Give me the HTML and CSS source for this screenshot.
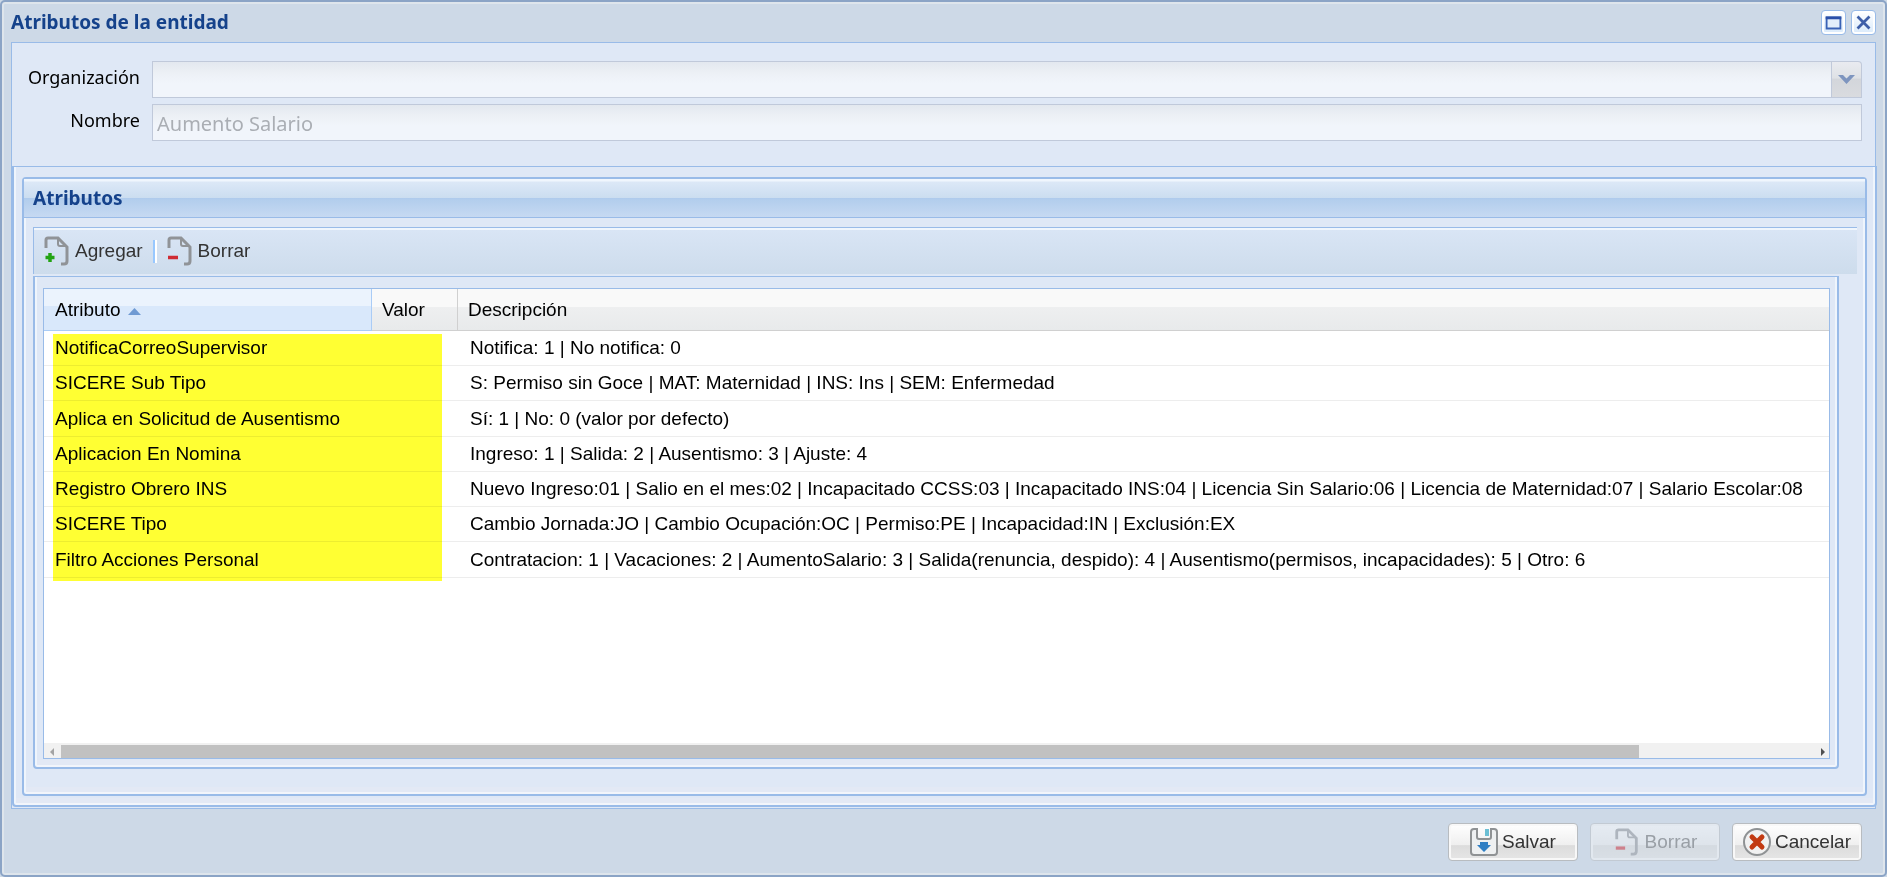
FILE: index.html
```html
<!DOCTYPE html>
<html lang="es">
<head>
  <meta charset="UTF-8">
  <meta name="viewport" content="width=device-width, initial-scale=1">
  <title>Atributos de la entidad</title>
  <link rel="stylesheet" href="styles.css">
</head>
<body>
  <!-- Iconos compartidos -->
  <svg class="sprite" aria-hidden="true">
    <symbol id="page" viewBox="0 0 26 30">
      <path d="M2 12V4Q2 2 4 2H14L23 11V25Q23 28 20 28H17" fill="none" stroke="#909397" stroke-width="3"/>
      <path d="M14 3V8Q14 10 16 10H22" fill="none" stroke="#909397" stroke-width="2"/>
    </symbol>
  </svg>

  <div class="window">
    <header class="window-header">
      <h1>Atributos de la entidad</h1>
      <button type="button" class="tool" aria-label="Maximizar">
        <svg viewBox="0 0 25 25"><path d="M5 7H20V19H5Z" fill="#e3eefb" stroke="#3a62b5" stroke-width="2"/><path d="M4 6H21V9H4Z" fill="#2b4fa8"/></svg>
      </button>
      <button type="button" class="tool" aria-label="Cerrar">
        <svg viewBox="0 0 25 25"><path d="M6 6L19 19M19 6L6 19" stroke="#3f5fa8" stroke-width="3"/></svg>
      </button>
    </header>

    <main class="content">
      <form class="entity-form">
        <label for="organizacion">Organización</label>
        <div class="combo">
          <select id="organizacion" disabled><option></option></select>
          <span class="trigger"><svg viewBox="0 0 17 10"><path d="M0 0H5L8.500 3.500L12 0H17L8.500 9Z" fill="#7e95bf"/></svg></span>
        </div>
        <label for="nombre">Nombre</label>
        <input type="text" id="nombre" value="Aumento Salario" disabled>
      </form>

      <div class="frame outer">
        <section class="frame panel">
          <h2>Atributos</h2>
          <div class="panel-body">
            <div class="toolbar">
              <button type="button" class="tb-btn">
                <svg viewBox="0 0 26 30"><use href="#page"/><path d="M6 17V26M1.500 21.500H10.500" stroke="#22a312" stroke-width="3.500"/></svg>
                Agregar
              </button>
              <span class="separator"></span>
              <button type="button" class="tb-btn">
                <svg viewBox="0 0 26 30"><use href="#page"/><path d="M1 21.500H11" stroke="#cf2b33" stroke-width="3.500"/></svg>
                Borrar
              </button>
            </div>

            <div class="frame grid-frame">
              <div class="grid">
                <div class="grid-view">
                  <table>
                    <thead>
                      <tr>
                        <th class="col-atributo sorted">Atributo <svg viewBox="0 0 13 7"><path d="M6.500 0L13 7H0Z" fill="#6f9ad3"/></svg></th>
                        <th class="col-valor">Valor</th>
                        <th>Descripción</th>
                      </tr>
                    </thead>
                    <tbody>
                      <tr><td>NotificaCorreoSupervisor</td><td></td><td>Notifica: 1 | No notifica: 0</td></tr>
                      <tr><td>SICERE Sub Tipo</td><td></td><td>S: Permiso sin Goce | MAT: Maternidad | INS: Ins | SEM: Enfermedad</td></tr>
                      <tr><td>Aplica en Solicitud de Ausentismo</td><td></td><td>Sí: 1 | No: 0 (valor por defecto)</td></tr>
                      <tr><td>Aplicacion En Nomina</td><td></td><td>Ingreso: 1 | Salida: 2 | Ausentismo: 3 | Ajuste: 4</td></tr>
                      <tr><td>Registro Obrero INS</td><td></td><td>Nuevo Ingreso:01 | Salio en el mes:02 | Incapacitado CCSS:03 | Incapacitado INS:04 | Licencia Sin Salario:06 | Licencia de Maternidad:07 | Salario Escolar:08</td></tr>
                      <tr><td>SICERE Tipo</td><td></td><td>Cambio Jornada:JO | Cambio Ocupación:OC | Permiso:PE | Incapacidad:IN | Exclusión:EX</td></tr>
                      <tr><td>Filtro Acciones Personal</td><td></td><td>Contratacion: 1 | Vacaciones: 2 | AumentoSalario: 3 | Salida(renuncia, despido): 4 | Ausentismo(permisos, incapacidades): 5 | Otro: 6</td></tr>
                    </tbody>
                  </table>
                  <div class="marker"></div>
                </div>
                <div class="scrollbar">
                  <svg viewBox="0 0 4 8"><path d="M4 0V8L0 4Z" fill="#a3a3a3"/></svg>
                  <div class="track"><div class="thumb"></div></div>
                  <svg viewBox="0 0 4 8"><path d="M0 0V8L4 4Z" fill="#505050"/></svg>
                </div>
              </div>
            </div>
          </div>
        </section>
      </div>
    </main>

    <footer class="window-footer">
      <button type="button" class="btn">
        <svg viewBox="0 0 28 28">
          <path d="M4 1H7V9Q7 11 9 11H19Q21 11 21 9V1H24Q27 1 27 4V24Q27 27 24 27H4Q1 27 1 24V4Q1 1 4 1Z" fill="#eef0f1" stroke="#8f9294" stroke-width="2"/>
          <path d="M15 1H19V8H15Z" fill="#6bbfd4"/>
          <path d="M10 14H18V17H21L14 24L7 17H10Z" fill="#2f7fc4"/>
        </svg>
        Salvar
      </button>
      <button type="button" class="btn" disabled>
        <svg viewBox="0 0 26 30"><use href="#page"/><path d="M1 21.500H11" stroke="#cf2b33" stroke-width="3.500"/></svg>
        Borrar
      </button>
      <button type="button" class="btn">
        <svg viewBox="0 0 28 28">
          <circle cx="14" cy="14" r="13" fill="#f1f1f1" stroke="#8f9294" stroke-width="2"/>
          <path d="M9 9L19 19M19 9L9 19" stroke="#c23a12" stroke-width="5" stroke-linecap="round"/>
        </svg>
        Cancelar
      </button>
    </footer>
  </div>
</body>
</html>
```

FILE: styles.css
```css
* {
  box-sizing: border-box;
  margin: 0;
  padding: 0;
}

body {
  font-family: "Liberation Sans", Arial, sans-serif;
  font-size: 19px;
  color: #000;
  background: #cdd9e7;
}

.sprite {
  position: absolute;
  width: 0;
  height: 0;
}

button,
input,
select {
  font: inherit;
}

.window {
  display: flex;
  flex-direction: column;
  min-height: 100vh;
  padding: 0 9px;
  border: 2px solid #8ba4c6;
  border-radius: 5px;
  background: #cdd9e7;
  box-shadow: inset 0 0 0 2px #dee5ec;
}

.window-header {
  display: flex;
  align-items: center;
  gap: 5px;
  height: 40px;
}

h1,
h2 {
  font-family: "Noto Sans", Tahoma, sans-serif;
  font-size: 19px;
  font-weight: bold;
  color: #15428b;
}

h1 {
  flex: 1;
}

.tool {
  width: 25px;
  height: 25px;
  border: 1px solid #99bbe8;
  border-radius: 4px;
  background: linear-gradient(#fff, #d9eafb);
  box-shadow: inset 0 0 0 2px #fff;
}

.tool svg {
  display: block;
  width: 23px;
  height: 23px;
}

.content {
  flex: 1;
  display: flex;
  flex-direction: column;
  padding-bottom: 1px;
  border: 1px solid #99bbe8;
  background: #dfe8f6;
}

/* Formulario */
.entity-form {
  display: grid;
  grid-template-columns: 128px 1fr;
  gap: 6px 12px;
  padding: 18px 13px 25px 0;
  font-family: "Noto Sans", Tahoma, sans-serif;
}

.entity-form label {
  font-size: 18px;
  line-height: 32px;
  text-align: right;
}

.combo {
  display: flex;
}

.entity-form select,
.entity-form input {
  width: 100%;
  height: 37px;
  padding: 1px 4px 0;
  border: 1px solid #c0c9da;
  background: linear-gradient(#e3e8ef, #ecf0f5 30%, #f1f5fb 60%);
  color: #aaaeb4;
  font-size: 20px;
  appearance: none;
  opacity: 1;
}

.trigger {
  display: flex;
  align-items: center;
  justify-content: center;
  width: 31px;
  border: 1px solid #c0c9da;
  border-left: 0;
  border-top-right-radius: 4px;
  background: linear-gradient(#e9ebf0, #dfe2e6 45%, #d3d6db 50%, #d9dbdf);
}

.trigger svg {
  width: 17px;
  height: 10px;
}

/* Marcos */
.frame {
  display: flex;
  flex-direction: column;
  border: 2px solid #99bbe8;
  border-top-width: 1px;
  border-radius: 0 0 4px 4px;
  background: #dfe8f6;
  box-shadow: inset 2px 0 #eff5fc, inset -2px 0 #eff5fc, inset 0 -2px #f2f5fb, inset 0 -7px #e3e9f5;
}

.outer {
  flex: 1;
  margin-right: -2px;
  padding: 10px 8px 9px;
}

.panel {
  flex: 1;
  border-top-width: 2px;
  border-radius: 4px;
}

h2 {
  padding-left: 9px;
  border-bottom: 1px solid #99bbe8;
  background: linear-gradient(#f0f6fd 2px, #dce8f7 3px, #cbddf0 19px, #aecaec 19px, #b3ceed 21px, #c6d9f2);
  line-height: 38px;
}

.panel-body {
  flex: 1;
  display: flex;
  flex-direction: column;
  gap: 2px;
  padding: 9px 8px 25px 9px;
}

.toolbar {
  display: flex;
  align-items: center;
  height: 47px;
  border-top: 1px solid #99bbe8;
  border-left: 1px solid #99bbe8;
  background: linear-gradient(#f0f6fd 2px, #d9e5f5 2px, #cddcec);
}

.tb-btn {
  display: flex;
  align-items: center;
  gap: 5px;
  padding: 0 10px;
  border: 0;
  background: none;
  color: #333;
}

.tb-btn svg {
  width: 26px;
  height: 30px;
}

.separator {
  width: 4px;
  height: 23px;
  border-left: 2px solid #98c8ff;
  border-right: 2px solid #fff;
}

.grid-frame {
  flex: 1;
  margin-right: 18px;
  padding: 11px 7px 8px 8px;
}

/* Tabla */
.grid {
  flex: 1;
  display: flex;
  flex-direction: column;
  border: 1px solid #99bbe8;
  background: #fff;
}

.grid-view {
  position: relative;
  flex: 1;
  overflow: hidden;
}

table {
  width: 100%;
  border-collapse: separate;
  border-spacing: 0;
  table-layout: fixed;
  white-space: nowrap;
}

th {
  height: 42px;
  padding: 0 10px;
  border-right: 1px solid #d0d0d0;
  border-bottom: 1px solid #d0d0d0;
  background: linear-gradient(#f9f9f9 45%, #eeeff0 45%, #e8eaeb);
  font-weight: normal;
  text-align: left;
}

th:last-child {
  border-right: 0;
}

.col-atributo {
  width: 328px;
}

.col-valor {
  width: 86px;
}

.sorted {
  padding-left: 11px;
  border-color: #aaccf6;
  background: linear-gradient(#ebf3fd 42%, #d9e8fb 42%);
}

.sorted svg {
  width: 13px;
  height: 7px;
  margin-left: 2px;
  vertical-align: 1px;
}

td {
  height: 35px;
  padding: 0 11px;
  border-bottom: 1px solid #ededed;
}

td:last-child {
  padding-left: 12px;
}

tr:nth-child(4n + 3) td {
  height: 36px;
}

/* Resaltador sobre las dos primeras columnas */
.marker {
  position: absolute;
  top: 45px;
  left: 9px;
  width: 389px;
  height: 247px;
  background: #ffff33;
  mix-blend-mode: multiply;
}

.scrollbar {
  display: flex;
  align-items: center;
  height: 15px;
  padding: 2px 4px 0 6px;
  background: #f1f1f1;
}

.scrollbar svg {
  width: 4px;
  height: 8px;
}

.track {
  flex: 1;
  height: 13px;
  margin: 0 7px;
}

.thumb {
  width: 90%;
  height: 100%;
  background: #c1c1c1;
}

/* Botones */
.window-footer {
  display: flex;
  justify-content: flex-end;
  gap: 12px;
  padding: 14px;
}

.btn {
  display: flex;
  align-items: center;
  justify-content: center;
  gap: 4px;
  width: 130px;
  height: 38px;
  border: 1px solid #b8bcc0;
  border-radius: 4px;
  background: linear-gradient(#fff, #efefef 58%, #dcdcdc 60%, #e6e6e6);
  box-shadow: inset 0 0 0 2px #f8f8f8;
  color: #333;
}

.btn svg {
  width: 28px;
  height: 28px;
}

.btn:disabled {
  opacity: 0.5;
  color: #666;
}
```
